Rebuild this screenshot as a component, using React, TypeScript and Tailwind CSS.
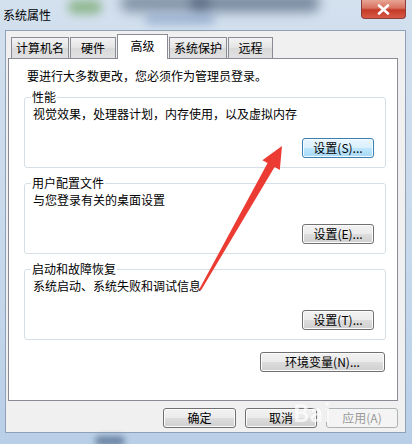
import React from "react";

type BtnKind = "normal" | "default" | "disabled";

const btnBase =
  "flex h-[20px] items-center justify-center rounded-[3px] border text-[12px] leading-none";

const btnKinds: Record<BtnKind, string> = {
  normal:
    "border-[#707070] text-black bg-[linear-gradient(to_bottom,#f2f2f2_0%,#ebebeb_50%,#dddddd_50%,#cfcfcf_100%)] shadow-[inset_0_0_0_1px_#fcfcfc]",
  default:
    "border-[#3c7fb1] text-black bg-[linear-gradient(to_bottom,#eaf6fd_0%,#d9f0fc_50%,#bee6fd_50%,#a7d9f5_100%)] shadow-[inset_0_0_0_1px_#f4fbff]",
  disabled: "border-[#adb2b5] text-[#9a9a9a] bg-[#f4f4f4]",
};

function Button({
  label,
  kind = "normal",
  className = "",
}: {
  label: string;
  kind?: BtnKind;
  className?: string;
}) {
  return (
    <button type="button" className={`${btnBase} ${btnKinds[kind]} ${className}`}>
      {label}
    </button>
  );
}

type Tab = { label: string; width: string; active?: boolean };

const tabs: Tab[] = [
  { label: "计算机名", width: "w-[58px] ml-[3px]" },
  { label: "硬件", width: "w-[46px] ml-[1px]" },
  { label: "高级", width: "w-[51px] ml-[1px]", active: true },
  { label: "系统保护", width: "w-[58px] ml-[1px]" },
  { label: "远程", width: "w-[45px] ml-[1px]" },
];

function Group({
  title,
  desc,
  button,
  kind = "normal",
}: {
  title: string;
  desc: string;
  button: string;
  kind?: BtnKind;
}) {
  return (
    <fieldset className="ml-[15px] w-[362px] rounded-[3px] border border-[#d5dfe5] pb-[9px] pl-[8px] pr-[11px]">
      <legend className="ml-[-2px] px-[1px] text-[12px] leading-[16px]">{title}</legend>
      <div className="flex h-[53px] flex-col">
        <p className="mt-[1px] text-[12px] leading-[16px]">{desc}</p>
        <Button label={button} kind={kind} className="mt-auto w-[72px] self-end" />
      </div>
    </fieldset>
  );
}

export default function App() {
  return (
    <div className="relative h-[444px] w-[412px] overflow-hidden bg-[linear-gradient(to_bottom,#d3e0ee,#c6d8eb_60%,#b9cfe7)] font-['Noto_Sans_CJK_SC','Noto_Sans',sans-serif] text-black">
      {/* glass blur behind the title bar */}
      <div className="pointer-events-none absolute left-[68px] top-[0px] h-[14px] w-[34px] rounded-full bg-[#7fae78] opacity-80 blur-[5px]" />
      <div className="pointer-events-none absolute left-[120px] top-[-6px] h-[18px] w-[90px] rounded-full bg-[#50627a] opacity-60 blur-[6px]" />
      <div className="pointer-events-none absolute left-[190px] top-[-6px] h-[18px] w-[130px] rounded-full bg-[#3f526c] opacity-60 blur-[6px]" />
      <div className="pointer-events-none absolute left-[145px] top-[14px] h-[10px] w-[70px] rounded-full bg-[#7896c0] opacity-60 blur-[5px]" />
      <div className="pointer-events-none absolute left-[95px] top-[436px] h-[10px] w-[30px] rounded-full bg-[#4d6787] opacity-70 blur-[3px]" />

      {/* close button */}
      <div className="absolute right-[6px] top-0 flex h-[19px] w-[45px] items-center justify-center rounded-b-[4px] border border-t-0 border-[#8d3d3d] bg-[linear-gradient(to_bottom,#e8a493_0%,#d8715f_45%,#c53a27_55%,#d65b45_100%)]">
        <svg width="13" height="11" viewBox="0 0 13 11">
          <path
            d="M2 1.5 L11 9.5 M11 1.5 L2 9.5"
            stroke="#fff"
            strokeWidth="2.6"
            strokeLinecap="round"
          />
        </svg>
      </div>

      {/* title bar */}
      <div className="relative flex h-[30px] items-center pl-[3px] text-[12px] leading-none">
        系统属性
      </div>

      {/* dialog body */}
      <div className="ml-[5px] flex h-[403px] w-[401px] flex-col border border-[#8fa1b6] bg-[#f0f0f0] pl-[2px] pr-[7px] pt-[3px]">
        {/* tabs */}
        <div className="relative z-10 flex h-[24px] items-end">
          {tabs.map((t) =>
            t.active ? (
              <div
                key={t.label}
                className={`${t.width} mb-[-1px] flex h-[25px] justify-center border border-b-0 border-[#898c95] bg-white pt-[3px] text-[12px] leading-[16px]`}
              >
                {t.label}
              </div>
            ) : (
              <div
                key={t.label}
                className={`${t.width} flex h-[21px] items-center justify-center border border-b-0 border-[#898c95] bg-[linear-gradient(to_bottom,#f3f3f3,#e3e3e3_50%,#d9d9d9_50%,#e1e1e1)] text-[12px] leading-none`}
              >
                {t.label}
              </div>
            ),
          )}
        </div>

        {/* tab panel */}
        <div className="flex h-[343px] w-[390px] flex-col border border-[#898c95] bg-white pt-[9px]">
          <p className="pl-[18px] text-[12px] leading-[16px]">
            要进行大多数更改，您必须作为管理员登录。
          </p>
          <div className="mt-[5px] flex flex-col gap-[7px]">
            <Group
              title="性能"
              desc="视觉效果，处理器计划，内存使用，以及虚拟内存"
              button="设置(S)..."
              kind="default"
            />
            <Group title="用户配置文件" desc="与您登录有关的桌面设置" button="设置(E)..." />
            <Group title="启动和故障恢复" desc="系统启动、系统失败和调试信息" button="设置(T)..." />
          </div>
          <Button label="环境变量(N)..." className="mr-[12px] mt-[12px] w-[125px] self-end" />
        </div>

        {/* bottom buttons */}
        <div className="flex justify-end gap-[9px] pt-[7px]">
          <Button label="确定" className="w-[73px]" />
          <Button label="取消" className="w-[72px]" />
          <Button label="应用(A)" kind="disabled" className="w-[72px]" />
        </div>
      </div>

      {/* watermark */}
      <div className="pointer-events-none absolute left-[293px] top-[400px] text-[24px] font-bold leading-none text-white opacity-70 [text-shadow:0_0_1px_#d0d0d0]">
        Bai
      </div>

      {/* red arrow */}
      <svg
        className="pointer-events-none absolute left-0 top-0"
        width="412"
        height="444"
        viewBox="0 0 412 444"
      >
        <polygon
          points="282,146 279.8,170.1 274.6,167.1 200.9,290.5 199.1,289.5 267.6,163.1 262.4,160.2"
          fill="#ec3b33"
        />
      </svg>
    </div>
  );
}
